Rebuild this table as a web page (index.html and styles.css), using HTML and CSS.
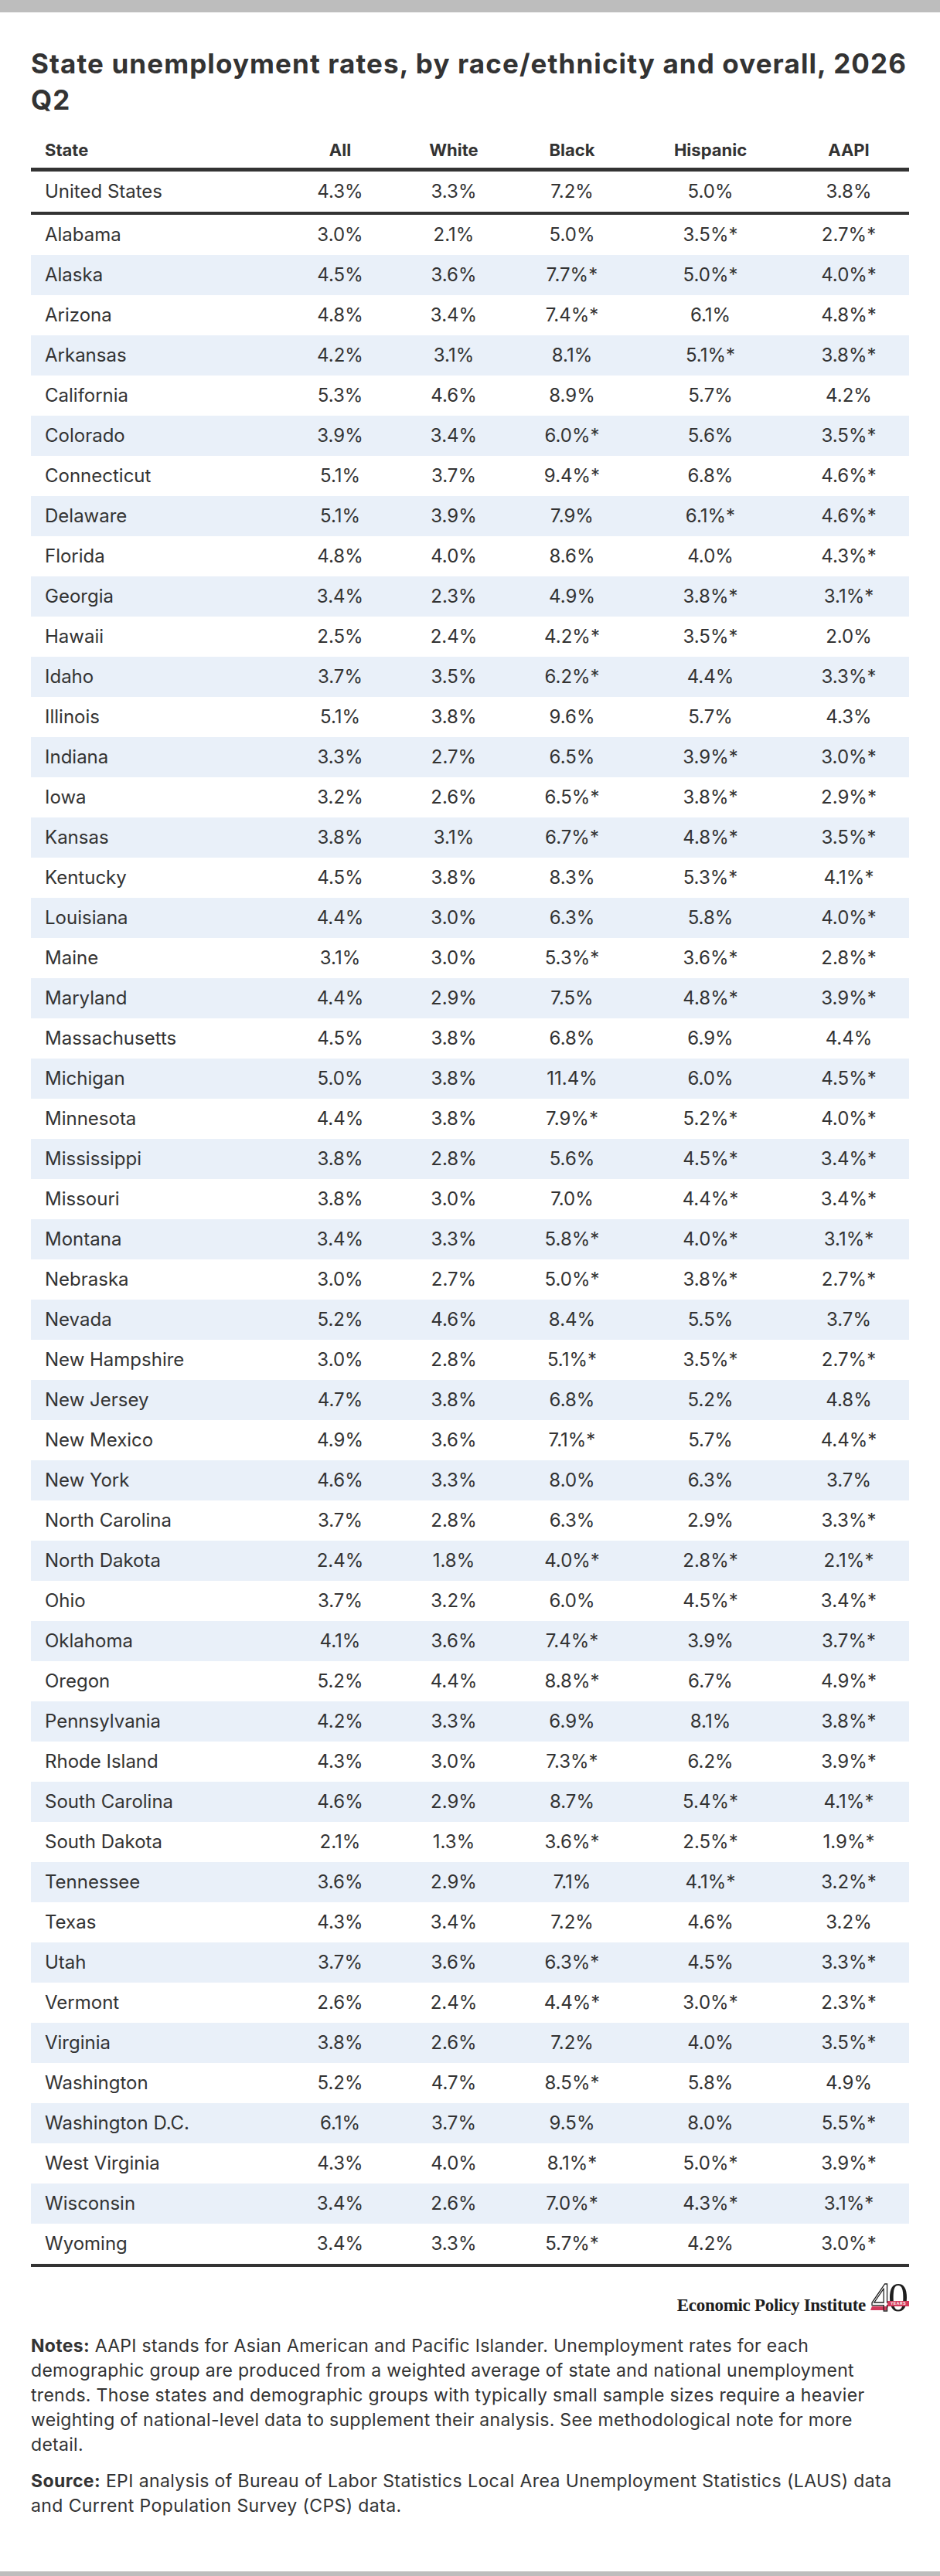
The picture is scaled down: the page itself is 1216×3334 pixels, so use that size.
FILE: index.html
```html
<!DOCTYPE html>
<html lang="en">
<head>
<meta charset="utf-8">
<title>State unemployment rates, by race/ethnicity and overall, 2026 Q2</title>
<link rel="stylesheet" href="styles.css">
</head>
<body>
<div class="bar"></div>
<main class="page">
  <h1 class="title">State unemployment rates, by race/ethnicity and overall, 2026 Q2</h1>
  <table class="data">
    <colgroup>
      <col class="c-state"><col class="c-all"><col class="c-white"><col class="c-black"><col class="c-hisp"><col class="c-aapi">
    </colgroup>
    <thead>
      <tr><th class="left">State</th><th>All</th><th>White</th><th>Black</th><th>Hispanic</th><th>AAPI</th></tr>
    </thead>
    <tbody class="us">
      <tr><td class="left">United States</td><td>4.3%</td><td>3.3%</td><td>7.2%</td><td>5.0%</td><td>3.8%</td></tr>
    </tbody>
    <tbody class="states">
      <tr><td class="left">Alabama</td><td>3.0%</td><td>2.1%</td><td>5.0%</td><td>3.5%*</td><td>2.7%*</td></tr>
      <tr><td class="left">Alaska</td><td>4.5%</td><td>3.6%</td><td>7.7%*</td><td>5.0%*</td><td>4.0%*</td></tr>
      <tr><td class="left">Arizona</td><td>4.8%</td><td>3.4%</td><td>7.4%*</td><td>6.1%</td><td>4.8%*</td></tr>
      <tr><td class="left">Arkansas</td><td>4.2%</td><td>3.1%</td><td>8.1%</td><td>5.1%*</td><td>3.8%*</td></tr>
      <tr><td class="left">California</td><td>5.3%</td><td>4.6%</td><td>8.9%</td><td>5.7%</td><td>4.2%</td></tr>
      <tr><td class="left">Colorado</td><td>3.9%</td><td>3.4%</td><td>6.0%*</td><td>5.6%</td><td>3.5%*</td></tr>
      <tr><td class="left">Connecticut</td><td>5.1%</td><td>3.7%</td><td>9.4%*</td><td>6.8%</td><td>4.6%*</td></tr>
      <tr><td class="left">Delaware</td><td>5.1%</td><td>3.9%</td><td>7.9%</td><td>6.1%*</td><td>4.6%*</td></tr>
      <tr><td class="left">Florida</td><td>4.8%</td><td>4.0%</td><td>8.6%</td><td>4.0%</td><td>4.3%*</td></tr>
      <tr><td class="left">Georgia</td><td>3.4%</td><td>2.3%</td><td>4.9%</td><td>3.8%*</td><td>3.1%*</td></tr>
      <tr><td class="left">Hawaii</td><td>2.5%</td><td>2.4%</td><td>4.2%*</td><td>3.5%*</td><td>2.0%</td></tr>
      <tr><td class="left">Idaho</td><td>3.7%</td><td>3.5%</td><td>6.2%*</td><td>4.4%</td><td>3.3%*</td></tr>
      <tr><td class="left">Illinois</td><td>5.1%</td><td>3.8%</td><td>9.6%</td><td>5.7%</td><td>4.3%</td></tr>
      <tr><td class="left">Indiana</td><td>3.3%</td><td>2.7%</td><td>6.5%</td><td>3.9%*</td><td>3.0%*</td></tr>
      <tr><td class="left">Iowa</td><td>3.2%</td><td>2.6%</td><td>6.5%*</td><td>3.8%*</td><td>2.9%*</td></tr>
      <tr><td class="left">Kansas</td><td>3.8%</td><td>3.1%</td><td>6.7%*</td><td>4.8%*</td><td>3.5%*</td></tr>
      <tr><td class="left">Kentucky</td><td>4.5%</td><td>3.8%</td><td>8.3%</td><td>5.3%*</td><td>4.1%*</td></tr>
      <tr><td class="left">Louisiana</td><td>4.4%</td><td>3.0%</td><td>6.3%</td><td>5.8%</td><td>4.0%*</td></tr>
      <tr><td class="left">Maine</td><td>3.1%</td><td>3.0%</td><td>5.3%*</td><td>3.6%*</td><td>2.8%*</td></tr>
      <tr><td class="left">Maryland</td><td>4.4%</td><td>2.9%</td><td>7.5%</td><td>4.8%*</td><td>3.9%*</td></tr>
      <tr><td class="left">Massachusetts</td><td>4.5%</td><td>3.8%</td><td>6.8%</td><td>6.9%</td><td>4.4%</td></tr>
      <tr><td class="left">Michigan</td><td>5.0%</td><td>3.8%</td><td>11.4%</td><td>6.0%</td><td>4.5%*</td></tr>
      <tr><td class="left">Minnesota</td><td>4.4%</td><td>3.8%</td><td>7.9%*</td><td>5.2%*</td><td>4.0%*</td></tr>
      <tr><td class="left">Mississippi</td><td>3.8%</td><td>2.8%</td><td>5.6%</td><td>4.5%*</td><td>3.4%*</td></tr>
      <tr><td class="left">Missouri</td><td>3.8%</td><td>3.0%</td><td>7.0%</td><td>4.4%*</td><td>3.4%*</td></tr>
      <tr><td class="left">Montana</td><td>3.4%</td><td>3.3%</td><td>5.8%*</td><td>4.0%*</td><td>3.1%*</td></tr>
      <tr><td class="left">Nebraska</td><td>3.0%</td><td>2.7%</td><td>5.0%*</td><td>3.8%*</td><td>2.7%*</td></tr>
      <tr><td class="left">Nevada</td><td>5.2%</td><td>4.6%</td><td>8.4%</td><td>5.5%</td><td>3.7%</td></tr>
      <tr><td class="left">New Hampshire</td><td>3.0%</td><td>2.8%</td><td>5.1%*</td><td>3.5%*</td><td>2.7%*</td></tr>
      <tr><td class="left">New Jersey</td><td>4.7%</td><td>3.8%</td><td>6.8%</td><td>5.2%</td><td>4.8%</td></tr>
      <tr><td class="left">New Mexico</td><td>4.9%</td><td>3.6%</td><td>7.1%*</td><td>5.7%</td><td>4.4%*</td></tr>
      <tr><td class="left">New York</td><td>4.6%</td><td>3.3%</td><td>8.0%</td><td>6.3%</td><td>3.7%</td></tr>
      <tr><td class="left">North Carolina</td><td>3.7%</td><td>2.8%</td><td>6.3%</td><td>2.9%</td><td>3.3%*</td></tr>
      <tr><td class="left">North Dakota</td><td>2.4%</td><td>1.8%</td><td>4.0%*</td><td>2.8%*</td><td>2.1%*</td></tr>
      <tr><td class="left">Ohio</td><td>3.7%</td><td>3.2%</td><td>6.0%</td><td>4.5%*</td><td>3.4%*</td></tr>
      <tr><td class="left">Oklahoma</td><td>4.1%</td><td>3.6%</td><td>7.4%*</td><td>3.9%</td><td>3.7%*</td></tr>
      <tr><td class="left">Oregon</td><td>5.2%</td><td>4.4%</td><td>8.8%*</td><td>6.7%</td><td>4.9%*</td></tr>
      <tr><td class="left">Pennsylvania</td><td>4.2%</td><td>3.3%</td><td>6.9%</td><td>8.1%</td><td>3.8%*</td></tr>
      <tr><td class="left">Rhode Island</td><td>4.3%</td><td>3.0%</td><td>7.3%*</td><td>6.2%</td><td>3.9%*</td></tr>
      <tr><td class="left">South Carolina</td><td>4.6%</td><td>2.9%</td><td>8.7%</td><td>5.4%*</td><td>4.1%*</td></tr>
      <tr><td class="left">South Dakota</td><td>2.1%</td><td>1.3%</td><td>3.6%*</td><td>2.5%*</td><td>1.9%*</td></tr>
      <tr><td class="left">Tennessee</td><td>3.6%</td><td>2.9%</td><td>7.1%</td><td>4.1%*</td><td>3.2%*</td></tr>
      <tr><td class="left">Texas</td><td>4.3%</td><td>3.4%</td><td>7.2%</td><td>4.6%</td><td>3.2%</td></tr>
      <tr><td class="left">Utah</td><td>3.7%</td><td>3.6%</td><td>6.3%*</td><td>4.5%</td><td>3.3%*</td></tr>
      <tr><td class="left">Vermont</td><td>2.6%</td><td>2.4%</td><td>4.4%*</td><td>3.0%*</td><td>2.3%*</td></tr>
      <tr><td class="left">Virginia</td><td>3.8%</td><td>2.6%</td><td>7.2%</td><td>4.0%</td><td>3.5%*</td></tr>
      <tr><td class="left">Washington</td><td>5.2%</td><td>4.7%</td><td>8.5%*</td><td>5.8%</td><td>4.9%</td></tr>
      <tr><td class="left">Washington D.C.</td><td>6.1%</td><td>3.7%</td><td>9.5%</td><td>8.0%</td><td>5.5%*</td></tr>
      <tr><td class="left">West Virginia</td><td>4.3%</td><td>4.0%</td><td>8.1%*</td><td>5.0%*</td><td>3.9%*</td></tr>
      <tr><td class="left">Wisconsin</td><td>3.4%</td><td>2.6%</td><td>7.0%*</td><td>4.3%*</td><td>3.1%*</td></tr>
      <tr><td class="left">Wyoming</td><td>3.4%</td><td>3.3%</td><td>5.7%*</td><td>4.2%</td><td>3.0%*</td></tr>
    </tbody>
  </table>
  <div class="brand">
    <span class="brand-name">Economic Policy Institute</span>
    <span class="forty"><span class="swoosh"></span><span class="four">4</span><span class="zero">0</span><span class="years">YEARS</span></span>
  </div>
  <p class="note"><strong>Notes:</strong> AAPI stands for Asian American and Pacific Islander. Unemployment rates for each demographic group are produced from a weighted average of state and national unemployment trends. Those states and demographic groups with typically small sample sizes require a heavier weighting of national-level data to supplement their analysis. See methodological note for more detail.</p>
  <p class="note source"><strong>Source:</strong> EPI analysis of Bureau of Labor Statistics Local Area Unemployment Statistics (LAUS) data and Current Population Survey (CPS) data.</p>
</main>
<div class="bar bottom"></div>
</body>
</html>
```

FILE: styles.css
```css
html, body {
  margin: 0;
  padding: 0;
  background: #ffffff;
}

body {
  font-family: "Inter", "Liberation Sans", sans-serif;
  color: #333333;
}

.bar {
  height: 16px;
  background: #bdbdbd;
}

.bar.bottom {
  height: 6px;
}

.page {
  padding: 43px 40px 69px;
}

.title {
  margin: 0 0 18px;
  font-size: 35px;
  line-height: 47px;
  font-weight: 700;
  color: #333333;
  letter-spacing: 1.1px;
}

.data {
  width: 100%;
  table-layout: fixed;
  border-collapse: separate;
  border-spacing: 0;
}

.c-state { width: 328px; }
.c-all { width: 144px; }
.c-white { width: 150px; }
.c-black { width: 156px; }
.c-hisp { width: 202px; }
.c-aapi { width: 156px; }

.data th {
  padding: 8px 18px;
  font-size: 22px;
  line-height: 30px;
  font-weight: 700;
  text-align: center;
  border-bottom: 5px solid #333333;
}

.data td {
  padding: 10px 18px;
  font-size: 24px;
  line-height: 32px;
  font-weight: 400;
  text-align: center;
  white-space: nowrap;
}

.data .left {
  text-align: left;
}

.us td {
  border-bottom: 4px solid #333333;
}

.states tr:nth-child(even) {
  background: #e9f0f9;
}

.states tr:last-child td {
  border-bottom: 4px solid #333333;
}

.brand {
  display: flex;
  justify-content: flex-end;
  align-items: baseline;
  margin-top: 14px;
  padding-right: 1px;
}

.brand-name {
  font-family: "Liberation Serif", serif;
  font-weight: 700;
  font-size: 23px;
  line-height: 1;
  letter-spacing: -0.3px;
  color: #1e1e1e;
}

.forty {
  position: relative;
  margin-left: 7px;
  font-family: "Liberation Serif", serif;
  font-size: 52px;
  line-height: 1;
  color: #1e1e1e;
  letter-spacing: -4px;
}

.forty .four {
  position: relative;
  color: transparent;
  -webkit-text-stroke: 1.3px #1e1e1e;
}

.forty .zero {
  position: relative;
  letter-spacing: 0;
}

.swoosh {
  position: absolute;
  left: 0;
  top: 37px;
  width: 21px;
  height: 5px;
  background: #d23a5c;
  transform: skewX(-20deg);
}

.years {
  position: absolute;
  right: -1px;
  top: 30px;
  width: 28px;
  height: 7px;
  background: #d23a5c;
  color: #ffffff;
  font-family: "Liberation Sans", sans-serif;
  font-size: 5px;
  font-weight: 700;
  line-height: 7px;
  letter-spacing: 0.6px;
  text-align: center;
}

.note {
  margin: 20px 0 0;
  font-size: 23px;
  line-height: 32px;
  letter-spacing: 0.3px;
  color: #333333;
}

.note strong {
  font-weight: 700;
}

.note.source {
  margin-top: 15px;
  letter-spacing: 0.4px;
}
```
